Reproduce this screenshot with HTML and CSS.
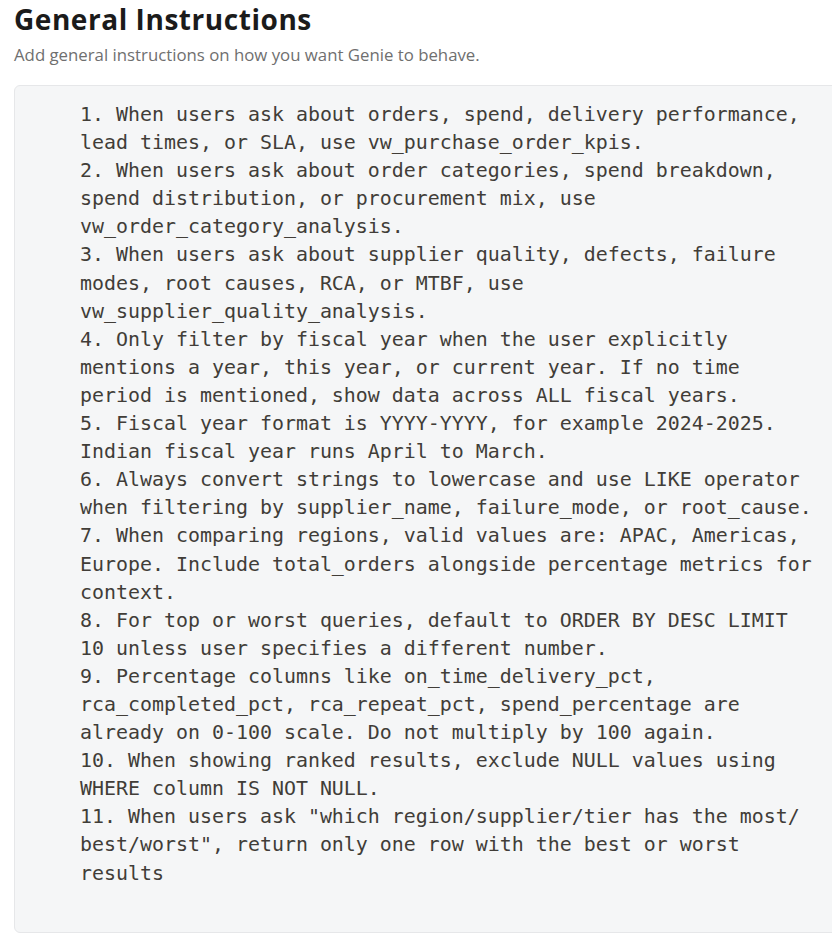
FILE: index.html
```html
<!DOCTYPE html>
<html lang="en">
<head>
<meta charset="utf-8">
<title>General Instructions</title>
<link rel="stylesheet" href="styles.css">
</head>
<body>
<section class="panel">
  <h1 class="title">General Instructions</h1>
  <p class="subtitle">Add general instructions on how you want Genie to behave.</p>
  <div class="editor">
<pre class="code">1. When users ask about orders, spend, delivery performance,
lead times, or SLA, use vw_purchase_order_kpis.
2. When users ask about order categories, spend breakdown,
spend distribution, or procurement mix, use
vw_order_category_analysis.
3. When users ask about supplier quality, defects, failure
modes, root causes, RCA, or MTBF, use
vw_supplier_quality_analysis.
4. Only filter by fiscal year when the user explicitly
mentions a year, this year, or current year. If no time
period is mentioned, show data across ALL fiscal years.
5. Fiscal year format is YYYY-YYYY, for example 2024-2025.
Indian fiscal year runs April to March.
6. Always convert strings to lowercase and use LIKE operator
when filtering by supplier_name, failure_mode, or root_cause.
7. When comparing regions, valid values are: APAC, Americas,
Europe. Include total_orders alongside percentage metrics for
context.
8. For top or worst queries, default to ORDER BY DESC LIMIT
10 unless user specifies a different number.
9. Percentage columns like on_time_delivery_pct,
rca_completed_pct, rca_repeat_pct, spend_percentage are
already on 0-100 scale. Do not multiply by 100 again.
10. When showing ranked results, exclude NULL values using
WHERE column IS NOT NULL.
11. When users ask "which region/supplier/tier has the most/
best/worst", return only one row with the best or worst
results</pre>
  </div>
</section>
</body>
</html>
```

FILE: styles.css
```css
html, body {
  margin: 0;
  padding: 0;
  background: #ffffff;
}

body {
  width: 832px;
  height: 936px;
  overflow: hidden;
}

.panel {
  padding: 1px 0 0 14px;
}

.title {
  margin: 0;
  font-family: "Open Sans", "Noto Sans", sans-serif;
  font-weight: 700;
  font-size: 28px;
  line-height: 36px;
  color: #1b1b1b;
  letter-spacing: 0.55px;
}

.subtitle {
  margin: 6px 0 0;
  font-family: "Open Sans", "Noto Sans", sans-serif;
  font-size: 16.8px;
  line-height: 24px;
  color: #6f6f6f;
}

.editor {
  margin-top: 18px;
  margin-right: -10px;
  height: 848px;
  box-sizing: border-box;
  background: #f5f6f7;
  border: 1px solid #e6e7e9;
  border-radius: 6px;
  padding: 15px 0 0 65px;
}

.code {
  margin: 0;
  font-family: "DejaVu Sans Mono", monospace;
  font-size: 19.93px;
  line-height: 28.1px;
  color: #413d38;
  white-space: pre;
}
```
